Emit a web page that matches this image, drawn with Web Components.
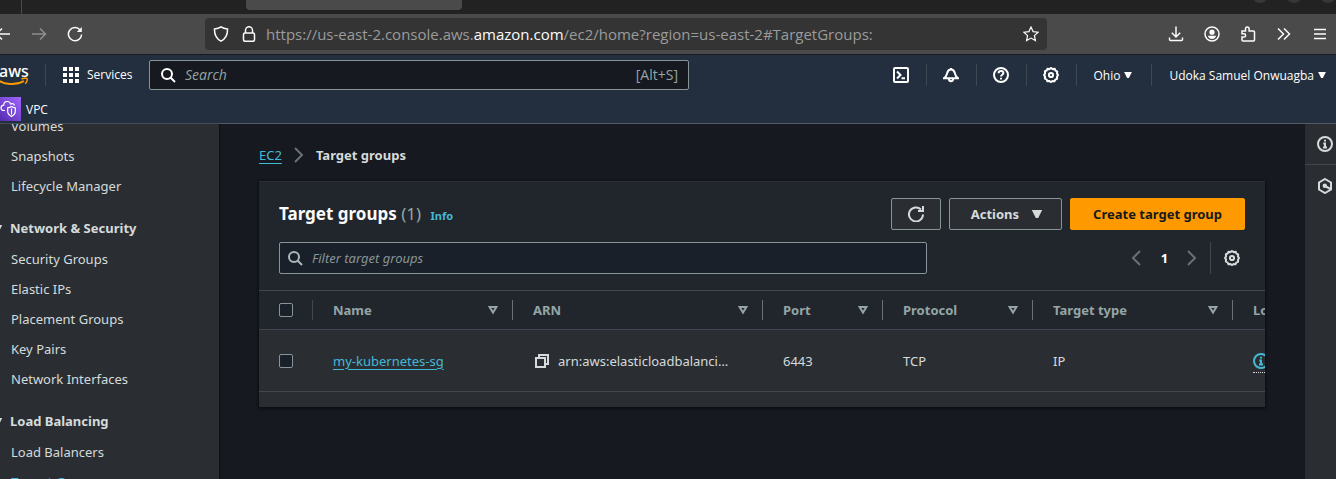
<!DOCTYPE html>
<html lang="en">
<head>
<meta charset="utf-8">
<title>Target groups | EC2</title>
<style>
  html, body { height: 100%; }
  body {
    margin: 0; overflow: hidden; background: #16191f; color: #d5dbdb;
    font: 13px/20px "Noto Sans", "Open Sans", sans-serif;
    --link: #44b9d6; --control: #879596; --divider: #414750; --surface: #2a2e33;
    --surface-head: #21252c; --field: #1a2029; --page: #16191f;
  }
</style>
</head>
<body>
<console-app>
  <browser-bar slot="chrome"></browser-bar>
  <console-header slot="header" region="Ohio" user="Udoka Samuel Onwuagba"></console-header>
  <side-nav slot="nav">
    <nav-group>
      <nav-item>Volumes</nav-item>
      <nav-item>Snapshots</nav-item>
      <nav-item>Lifecycle Manager</nav-item>
    </nav-group>
    <nav-group heading="Network &amp; Security">
      <nav-item>Security Groups</nav-item>
      <nav-item>Elastic IPs</nav-item>
      <nav-item>Placement Groups</nav-item>
      <nav-item>Key Pairs</nav-item>
      <nav-item>Network Interfaces</nav-item>
    </nav-group>
    <nav-group heading="Load Balancing">
      <nav-item>Load Balancers</nav-item>
      <nav-item current>Target Groups</nav-item>
    </nav-group>
  </side-nav>
  <bread-crumbs></bread-crumbs>
  <resource-panel>
    <target-table></target-table>
  </resource-panel>
  <tools-rail slot="tools"></tools-rail>
</console-app>

<script>
const define = (name, html, setup) => {
  const template = document.createElement("template");
  template.innerHTML = html;
  customElements.define(name, class extends HTMLElement {
    constructor() {
      super();
      this.attachShadow({ mode: "open" }).append(template.content.cloneNode(true));
    }
    connectedCallback() { if (setup) setup(this, this.shadowRoot); }
  });
};

const ICONS = {
  back: '<path d="M15 8H1.500M7 2.500 1.500 8 7 13.500"/>',
  forward: '<path d="M1 8h13.500M9 2.500 14.500 8 9 13.500"/>',
  reloadThin: '<path d="M13.300 4.200A6.600 6.600 0 1 0 14.600 8.500"/><path d="M14.800 1v5h-5z" fill="currentColor" stroke="none"/>',
  shield: '<path d="M8 .8C6 2.300 3.800 2.800 1.500 3c-.2 5.500 1.500 9.500 6.500 12.200C13 12.500 14.700 8.500 14.500 3 12.200 2.800 10 2.300 8 .8z"/>',
  lock: '<rect x="2.500" y="7" width="11" height="8.300" rx="1.500"/><path d="M4.500 7V4.200a3.500 3.500 0 0 1 7 0V7"/>',
  star: '<path stroke-width="1.200" d="m8 1 2.100 4.600 5 .6-3.700 3.400 1 5L8 12.100l-4.400 2.500 1-5L.9 6.200l5-.6z"/>',
  download: '<path d="M8 .5v10.300M3.800 6.800 8 11l4.200-4.200M1.500 11.500v2q0 1 1 1h11q1 0 1-1v-2"/>',
  account: '<circle cx="8" cy="8" r="7"/><circle cx="8" cy="6.200" r="2.600" fill="currentColor" stroke="none"/><path d="M3.800 9.800h8.400c-.5 2-2 3.200-4.200 3.200s-3.700-1.200-4.200-3.200z" fill="currentColor" stroke="none"/>',
  puzzle: '<path d="M2 5h3.500V2.800a1.800 1.800 0 0 1 3.600 0V5h4.400q1 0 1 1v8q0 1-1 1H3q-1 0-1-1v-3h2a1.600 1.600 0 0 0 0-3.200H2z"/>',
  more: '<path d="M2 2.500 7.500 8 2 13.500M8 2.500 13.500 8 8 13.500"/>',
  menu: '<path d="M2 3.500h12M2 8h12M2 12.500h12"/>',
  grid: '<path fill="currentColor" stroke="none" d="M0 0h4v4H0zM6 0h4v4H6zM12 0h4v4h-4zM0 6h4v4H0zM6 6h4v4H6zM12 6h4v4h-4zM0 12h4v4H0zM6 12h4v4H6zM12 12h4v4h-4z"/>',
  search: '<circle cx="7" cy="7" r="5"/><path d="m10.500 10.500 4.500 4.500"/>',
  shell: '<rect x="1" y="1" width="14" height="14" rx="1"/><path d="m4 4.500 3.500 3.500L4 11.500M8.500 11.200H12"/>',
  bell: '<path d="M8 1v1.500M1 11.200h14c-2.500-1.600-2.700-3.200-3.200-5.200C11.300 3.800 10 2.500 8 2.500S4.700 3.800 4.200 6C3.700 8 3.500 9.600 1 11.200zM5.800 11.500a2.200 2.700 0 0 0 4.400 0"/>',
  help: '<circle cx="8" cy="8" r="7"/><path d="M5.600 6.300C5.600 4.800 6.600 4 8 4s2.400.8 2.400 2.100C10.400 7.600 8 7.800 8 9.500M8 10.700v1.800"/>',
  gear: '<path d="M8 1 9.700 2.100 11.700 1.900 12.500 3.600 14.200 4.500 14 6.400 15 8 14 9.700 14.100 11.600 12.400 12.500 11.500 14.200 9.600 14 8 15 6.400 14 4.400 14.100 3.500 12.400 1.900 11.500 2.100 9.600 1 8 2.100 6.400 1.900 4.400 3.600 3.500 4.500 1.900 6.400 2.100z"/><circle cx="8" cy="8" r="2.100"/>',
  caret: '<path fill="currentColor" stroke="none" d="M2.800 4h10.400L9.200 12H6.800z"/>',
  sort: '<path d="M4.600 5h6.800L8 10.500z"/>',
  right: '<path d="m4 1 7 7-7 7"/>',
  left: '<path d="m11 1-7 7 7 7"/>',
  refresh: '<path d="M15 8.500A7 7 0 1 1 13 3.500"/><path d="M15 0v5H10"/>',
  copy: '<path d="M2 5h9v9H2z"/><path d="M5 5V2h9v9h-3"/>',
  info: '<circle cx="8" cy="8" r="7"/><path d="M8 3.700v1.900M6.300 7.500H8v4M6 11.500h4"/>',
  hexagon: '<path d="m8 1 6 3.500v7L8 15l-6-3.500v-7z"/><circle cx="7.800" cy="7.800" r="2.200" fill="currentColor" stroke="none"/><path d="m8 8 5.500 3"/>',
};

define("ui-icon", `
  <style>
    :host { display: block; flex: none; width: 16px; height: 16px; }
    svg { display: block; width: 100%; height: 100%; fill: none; stroke: currentColor; stroke-width: var(--stroke, 2); }
  </style>
  <svg viewBox="0 0 16 16" aria-hidden="true"></svg>`,
  (host, root) => { root.querySelector("svg").innerHTML = ICONS[host.getAttribute("name")]; });

define("console-app", `
  <style>
    :host { display: flex; flex-direction: column; height: 100vh; }
    .body { flex: 1; min-height: 0; display: grid; grid-template-columns: 219px minmax(0, 1fr) 31px; }
    .body > ::slotted(*) { min-height: 0; }
    main { padding: 20px 40px 0; min-width: 0; overflow: hidden; }
  </style>
  <slot name="chrome"></slot>
  <slot name="header"></slot>
  <div class="body">
    <slot name="nav"></slot>
    <main><slot></slot></main>
    <slot name="tools"></slot>
  </div>`);

define("browser-bar", `
  <style>
    :host { display: block; flex: none; background: #222; color: #fbfbfe; border-bottom: 1px solid #1c1b22; --stroke: 1.5; }
    .tabs { display: flex; height: 14px; overflow: hidden; }
    .pin { width: 21px; border-right: 1px solid #4a4a4a; }
    .tab { width: 216px; height: 10px; margin-left: 224px; background: #4a4a4a; border-radius: 0 0 4px 4px; }
    .window { display: flex; gap: 18px; margin: -13px 0 0 auto; }
    .window i { width: 16px; height: 16px; border-radius: 50%; background: #373737; }
    .bar { display: flex; align-items: center; height: 40px; background: #4a4a4a; }
    button { all: unset; display: block; }
    .nav { display: flex; gap: 20px; margin-left: -5px; width: 210px; }
    .nav button:nth-child(2) { color: #8f8f8f; }
    .address { display: flex; align-items: center; box-sizing: border-box; flex: 0 1 842px; height: 32px; padding: 0 8px; background: #343434; border-radius: 4px; }
    .address ui-icon + ui-icon { margin-left: 12px; }
    .url { flex: 1; margin-left: 9px; font: 15px/20px "Open Sans", sans-serif; color: #9b9b9b; white-space: nowrap; }
    .url b { font-weight: 400; color: #fbfbfe; }
    .actions { display: flex; gap: 20px; margin: 0 8px 0 auto; }
  </style>
  <div class="tabs"><div class="pin"></div><div class="tab"></div><div class="window"><i></i><i></i><i></i></div></div>
  <div class="bar">
    <div class="nav">
      <button aria-label="Back"><ui-icon name="back"></ui-icon></button>
      <button aria-label="Forward"><ui-icon name="forward"></ui-icon></button>
      <button aria-label="Reload"><ui-icon name="reloadThin"></ui-icon></button>
    </div>
    <div class="address">
      <ui-icon name="shield"></ui-icon><ui-icon name="lock"></ui-icon>
      <span class="url">https://us-east-2.console.aws.<b>amazon.com</b>/ec2/home?region=us-east-2#TargetGroups:</span>
      <button aria-label="Bookmark"><ui-icon name="star"></ui-icon></button>
    </div>
    <div class="actions">
      <button aria-label="Downloads"><ui-icon name="download"></ui-icon></button>
      <button aria-label="Account"><ui-icon name="account"></ui-icon></button>
      <button aria-label="Extensions"><ui-icon name="puzzle"></ui-icon></button>
      <button aria-label="More tools"><ui-icon name="more"></ui-icon></button>
      <button aria-label="Menu"><ui-icon name="menu"></ui-icon></button>
    </div>
  </div>`);

define("console-header", `
  <style>
    :host { display: block; flex: none; background: #232f3e; border-bottom: 1px solid #545b64; color: #fff; font-family: "Open Sans", sans-serif; font-size: 12px; }
    .top { display: flex; align-items: center; height: 40px; }
    .logo { display: block; margin-left: -4px; width: 49px; }
    .logo svg { display: block; }
    .logo text { font: 500 16px "Noto Sans", sans-serif; fill: #fff; }
    button { all: unset; display: flex; align-items: center; box-sizing: border-box; }
    .services { gap: 8px; padding-left: 17px; width: 103px; }
    .rule { width: 1px; height: 22px; background: #414750; }
    .search { display: flex; align-items: center; gap: 9px; box-sizing: border-box; flex: 0 1 540px; height: 30px; padding: 0 10px; border: 1px solid var(--control); border-radius: 2px; background: var(--page); }
    input { all: unset; flex: 1; min-width: 0; font-size: 14px; }
    input::placeholder { color: #95a5a6; font-style: italic; opacity: 1; }
    kbd { font: inherit; font-size: 14px; color: #95a5a6; }
    .tools { display: flex; align-items: center; margin-left: auto; }
    .icon { width: 49px; justify-content: center; }
    .menu { padding: 0 17px; gap: 2px; }
    .menu:last-child { padding-right: 8px; }
    .menu ui-icon { width: 12px; height: 12px; }
    .services, .menu span, .favorites span { line-height: 22px; }
    .menu span, .favorites span { padding-top: 2px; }
    .favorites { display: flex; height: 28px; align-items: center; }
    .favorites a { display: flex; align-items: center; gap: 5px; margin-left: -3px; color: #fff; text-decoration: none; }
  </style>
  <div class="top">
    <a class="logo" href="#" aria-label="AWS home">
      <svg width="34" height="28" viewBox="0 0 34 28">
        <text x="3" y="16">aws</text>
        <path d="M1 18.500c7 5.500 19 6 27 1.500" fill="none" stroke="#f90" stroke-width="2"/>
        <path d="M25.500 18c2-1 5-1 5.500-.5s.3 3.500-1.800 5.300" fill="none" stroke="#f90" stroke-width="1.500"/>
      </svg>
    </a>
    <i class="rule"></i>
    <button class="services"><ui-icon name="grid"></ui-icon>Services</button>
    <label class="search"><ui-icon name="search"></ui-icon><input type="search" placeholder="Search" aria-label="Search"><kbd>[Alt+S]</kbd></label>
    <div class="tools">
      <button class="icon" aria-label="CloudShell"><ui-icon name="shell"></ui-icon></button><i class="rule"></i>
      <button class="icon" aria-label="Notifications"><ui-icon name="bell"></ui-icon></button><i class="rule"></i>
      <button class="icon" aria-label="Help"><ui-icon name="help"></ui-icon></button><i class="rule"></i>
      <button class="icon" aria-label="Settings"><ui-icon name="gear"></ui-icon></button><i class="rule"></i>
      <button class="menu"><span id="region"></span><ui-icon name="caret"></ui-icon></button><i class="rule"></i>
      <button class="menu"><span id="user"></span><ui-icon name="caret"></ui-icon></button>
    </div>
  </div>
  <nav class="favorites">
    <a href="#">
      <svg width="24" height="24" viewBox="0 0 24 24" fill="none" stroke="#fff" stroke-width="1.200" aria-hidden="true">
        <defs><linearGradient id="g" x1="0" y1="1" x2="1" y2="0"><stop stop-color="#4d27a8"/><stop offset="1" stop-color="#a166ff"/></linearGradient></defs>
        <path d="M0 0h24v24H0z" fill="url(#g)" stroke="none"/>
        <path d="M8 13.500H7C5 13.500 4 12.500 4 11s1-2.600 2.700-2.800C6.700 5.800 8.200 4.500 10.200 4.500c1.800 0 3 1 3.600 2.600 1.700-1 3.400-.4 3.600 1.400"/>
        <path d="M14.500 9.500c1.300.9 2.500 1.200 3.800 1.300v3.700c0 2-1.500 3.700-3.800 5-2.300-1.300-3.800-3-3.800-5v-3.700c1.300-.1 2.500-.4 3.800-1.300zM14.500 11.500v6"/>
      </svg><span>VPC</span></a>
  </nav>`,
  (host, root) => {
    for (const key of ["region", "user"]) root.getElementById(key).textContent = host.getAttribute(key);
  });

define("side-nav", `
  <style>
    :host { display: block; overflow: hidden; background: var(--surface); box-shadow: 1px 0 1px #0f1116; }
    nav { margin-top: -13px; }
  </style>
  <nav aria-label="EC2"><slot></slot></nav>`);

define("nav-group", `
  <style>
    :host { display: block; padding-bottom: 12px; }
    h2 { display: flex; align-items: center; gap: 5px; margin: 0 0 0 -11px; font-size: 13px; line-height: 31px; }
    h2[hidden] { display: none; }
  </style>
  <h2><ui-icon name="caret"></ui-icon><span></span></h2><slot></slot>`,
  (host, root) => {
    const heading = host.getAttribute("heading");
    root.querySelector("h2").hidden = !heading;
    root.querySelector("span").textContent = heading || "";
  });

define("nav-item", `
  <style>
    :host { display: block; padding-left: 11px; line-height: 30px; }
    a { color: inherit; text-decoration: none; }
    :host([current]) a { color: var(--link); font-weight: 700; }
  </style>
  <a href="#"><slot></slot></a>`);

define("bread-crumbs", `
  <style>
    :host { display: block; }
    nav { display: flex; align-items: center; gap: 9px; height: 22px; margin-bottom: 15px; }
    a { color: var(--link); text-underline-offset: 3px; }
    ui-icon { color: #687078; }
  </style>
  <nav aria-label="Breadcrumbs"><a href="#">EC2</a><ui-icon name="right"></ui-icon><b>Target groups</b></nav>`);

define("resource-panel", `
  <style>
    :host { display: block; overflow: hidden; background: var(--surface); box-shadow: 0 1px 2px 1px #0d0f13; padding-bottom: 15px; }
    header { background: var(--surface-head); padding: 16px 20px; border-top: 1px solid #2c3036; }
    .row { display: flex; align-items: center; height: 32px; }
    .row + .row { margin-top: 12px; }
    h1 { margin: 0 auto 0 0; padding-top: 2px; font-size: 17px; line-height: 24px; color: #fafafa; }
    h1 span { font-weight: 400; color: #95a5a6; }
    h1 a { margin-left: 5px; font-size: 11px; color: var(--link); text-decoration: none; }
    button { all: unset; display: flex; align-items: center; justify-content: center; box-sizing: border-box; color: #d5dbdb; }
    .btn { height: 32px; margin-left: 8px; padding: 0 22px; border: 1px solid var(--control); border-radius: 2px; background: var(--surface); font-weight: 700; }
    .icon { padding: 0; width: 50px; }
    .menu { gap: 10px; padding: 0 16px 0 21px; }
    .primary { background: #f90; border-color: #f90; color: #16191f; }
    .filter { display: flex; align-items: center; gap: 9px; box-sizing: border-box; height: 32px; flex: 0 1 648px; padding: 0 7px; border: 1px solid var(--control); border-radius: 2px; background: #1a2029; color: #aab7b8; }
    input { all: unset; flex: 1; min-width: 0; }
    input::placeholder { color: #879596; font-style: italic; opacity: 1; }
    .pages { display: flex; align-items: center; margin-left: auto; padding-right: 5px; color: #fff; }
    .pages button { width: 16px; color: #687078; }
    .pages b { width: 39px; text-align: center; }
    .pages i { width: 1px; height: 32px; margin: 0 13px 0 10px; background: var(--divider); }
    .pages .settings { color: #d5dbdb; }
  </style>
  <header>
    <div class="row">
      <h1>Target groups <span>(1)</span> <a href="#">Info</a></h1>
      <button class="btn icon" aria-label="Refresh"><ui-icon name="refresh"></ui-icon></button>
      <button class="btn menu">Actions<ui-icon name="caret"></ui-icon></button>
      <button class="btn primary">Create target group</button>
    </div>
    <div class="row">
      <label class="filter"><ui-icon name="search"></ui-icon><input type="search" placeholder="Filter target groups" aria-label="Filter target groups"></label>
      <div class="pages">
        <button aria-label="Previous page"><ui-icon name="left"></ui-icon></button><b>1</b>
        <button aria-label="Next page"><ui-icon name="right"></ui-icon></button><i></i>
        <button class="settings" aria-label="Preferences"><ui-icon name="gear"></ui-icon></button>
      </div>
    </div>
  </header>
  <slot></slot>`);

define("target-table", `
  <style>
    :host { display: block; overflow: hidden; }
    table { width: 1174px; table-layout: fixed; border-collapse: separate; border-spacing: 0; }
    th, td { box-sizing: border-box; padding: 0 15px 0 20px; text-align: left; border-bottom: 1px solid var(--divider); white-space: nowrap; }
    th { height: 40px; padding: 0; border-top: 1px solid var(--divider); background: var(--surface-head); color: #95a5a6; }
    td { height: 62px; }
    .cell { display: flex; align-items: center; justify-content: space-between; box-sizing: border-box; height: 20px; padding: 0 11px 0 20px; border-right: 1px solid #687078; }
    th:first-child .cell { border-color: var(--divider); }
    input { appearance: none; display: block; box-sizing: border-box; width: 14px; height: 14px; margin: 0; border: 1px solid var(--control); border-radius: 2px; background: var(--field); }
    .link { color: var(--link); text-underline-offset: 3px; }
    .arn { display: flex; align-items: center; gap: 8px; padding-left: 1px; }
    button { all: unset; }
    .status { display: block; width: 80px; padding: 4px 0 3px; color: var(--link); border-bottom: 1px dotted #d5dbdb; }
  </style>
  <table>
    <colgroup><col style="width:54px"><col style="width:200px"><col style="width:250px"><col style="width:120px"><col style="width:150px"><col style="width:200px"><col></colgroup>
    <thead><tr>
      <th><div class="cell"><input type="checkbox" aria-label="Select all"></div></th>
      <th><div class="cell">Name<ui-icon name="sort"></ui-icon></div></th>
      <th><div class="cell">ARN<ui-icon name="sort"></ui-icon></div></th>
      <th><div class="cell">Port<ui-icon name="sort"></ui-icon></div></th>
      <th><div class="cell">Protocol<ui-icon name="sort"></ui-icon></div></th>
      <th><div class="cell">Target type<ui-icon name="sort"></ui-icon></div></th>
      <th><div class="cell">Load balancer<ui-icon name="sort"></ui-icon></div></th>
    </tr></thead>
    <tbody><tr>
      <td><input type="checkbox" aria-label="Select my-kubernetes-sg"></td>
      <td><a class="link" href="#">my-kubernetes-sg</a></td>
      <td><div class="arn"><button aria-label="Copy ARN"><ui-icon name="copy"></ui-icon></button>arn:aws:elasticloadbalanci…</div></td>
      <td>6443</td>
      <td>TCP</td>
      <td>IP</td>
      <td><span class="status"><ui-icon name="info"></ui-icon></span></td>
    </tr></tbody>
  </table>`);

define("tools-rail", `
  <style>
    :host { display: block; background: var(--surface); overflow: hidden; }
    button { all: unset; display: flex; align-items: center; box-sizing: border-box; width: 100%; height: 41px; padding-left: 12px; border-bottom: 1px solid var(--divider); }
    button:last-child { border: 0; }
  </style>
  <button aria-label="Info"><ui-icon name="info"></ui-icon></button>
  <button aria-label="Tutorials"><ui-icon name="hexagon"></ui-icon></button>`);
</script>
</body>
</html>
